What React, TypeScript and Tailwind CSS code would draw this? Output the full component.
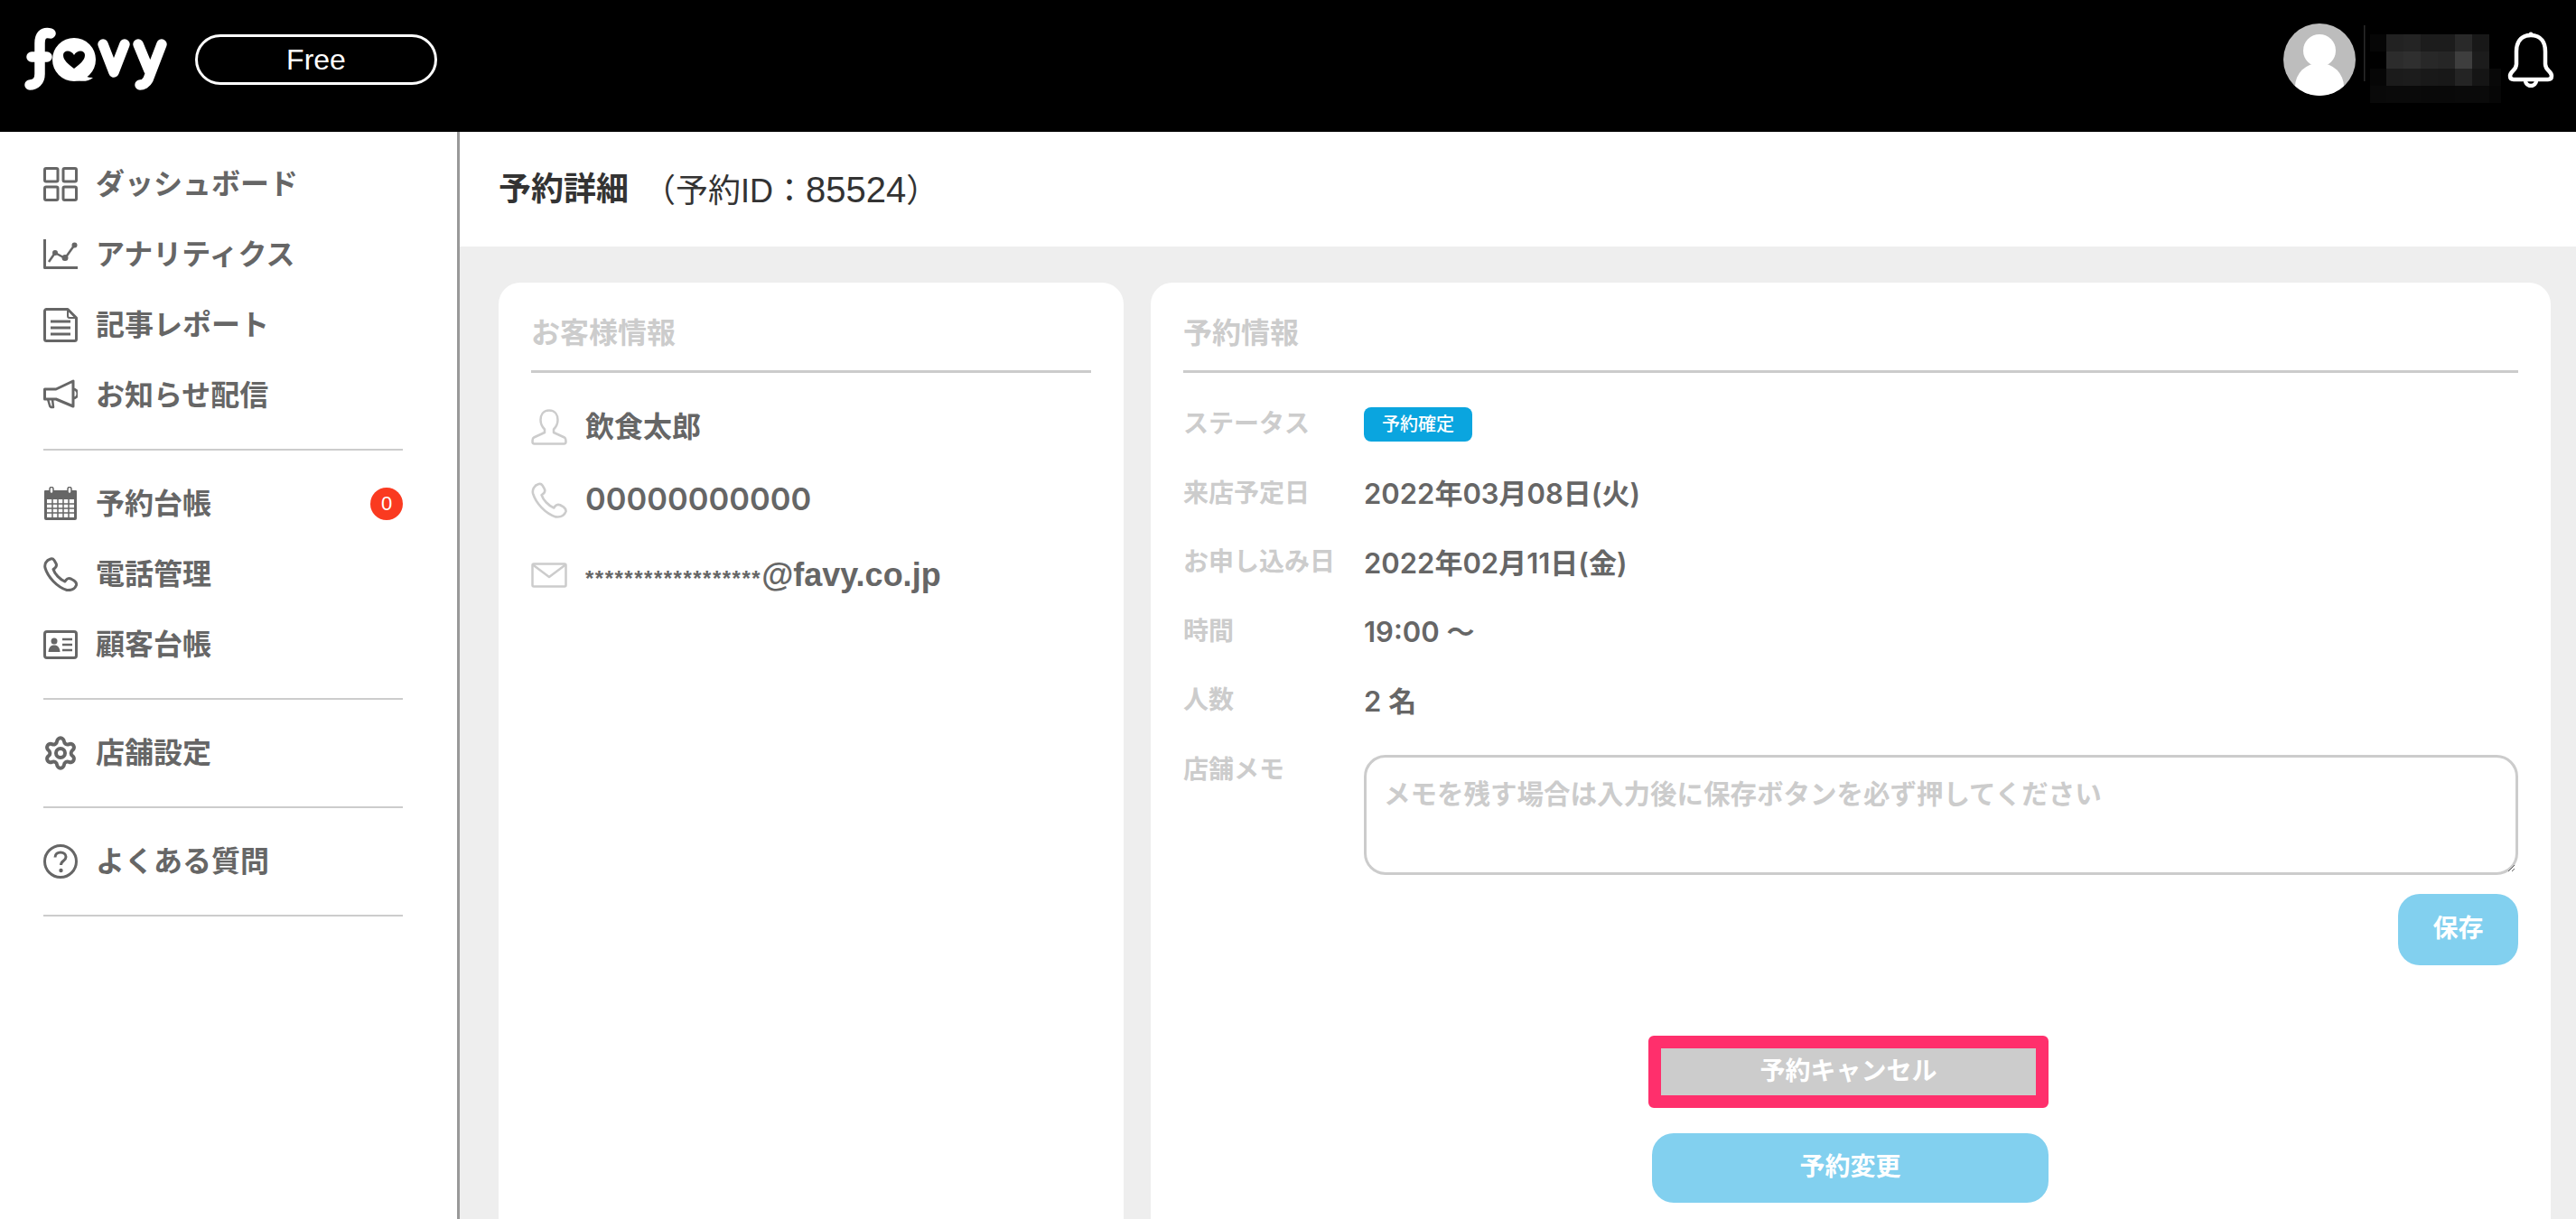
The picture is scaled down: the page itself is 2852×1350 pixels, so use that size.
import React from 'react';
import { Settings } from 'lucide-react';

const FONT = "font-['Liberation_Sans','Noto_Sans_CJK_JP',sans-serif]";
const VALUE_FONT = "font-['Inter','Noto_Sans_CJK_JP',sans-serif]";

const FavyLogo = () => (
  <svg width="160" height="72" viewBox="0 0 160 72" className="block">
    <g fill="none" stroke="#fff" strokeWidth="11.5" strokeLinecap="round" strokeLinejoin="round">
      <path d="M29 7 C20 5 17 10 17 18 L17 52 C17 60 12 64 6 64" />
      <path d="M8 33 L25 33" />
      <path d="M87 19 L99 50 L111 19" />
      <path d="M126 19 L138 48 M152 19 L137 58 C135 62 131 64 128 64" />
    </g>
    <circle cx="55" cy="36" r="24" fill="#fff" />
    <path d="M62 52 C66 54 70 56 76 56 C71 61 62 60 56 59 Z" fill="#fff" />
    <path d="M55 46 C49 41 43 37 43 31 C43 25 52 25 55 31 C58 25 67 25 67 31 C67 37 61 41 55 46 Z" fill="#000" />
  </svg>
);

const MOSAIC_X = [0, 18, 37, 56, 75, 94, 113, 132, 145];
const MOSAIC = [
  ['#060606', '#222222', '#242424', '#1c1c1c', '#1c1c1c', '#292929', '#181818', '#000000'],
  ['#000000', '#2c2c2c', '#2f2f2f', '#282828', '#262626', '#3e3e3e', '#1c1c1c', '#000000'],
  ['#060606', '#1b1b1b', '#1c1c1c', '#191919', '#181818', '#242424', '#151515', '#080808'],
  ['#090909', '#0a0a0a', '#0a0a0a', '#090909', '#090909', '#0a0a0a', '#0a0a0a', '#060606'],
];

const BlurredName = () => (
  <svg width="153" height="90" viewBox="0 0 153 90" className="block">
    <rect x="0" y="4" width="1.5" height="62" fill="#2a2a2a" />
    {MOSAIC.map((row, r) =>
      row.map((c, i) => (
        <rect key={`${r}-${i}`} x={MOSAIC_X[i] + 7} y={14 + r * 19} width={MOSAIC_X[i + 1] - MOSAIC_X[i]} height="19" fill={c} />
      ))
    )}
  </svg>
);

const Icon = ({ children }: { children: React.ReactNode }) => (
  <svg width="38" height="38" viewBox="0 0 38 38" fill="none" stroke="#666" strokeWidth="3" strokeLinejoin="round" className="shrink-0">
    {children}
  </svg>
);

const navGroups: { icon: React.ReactNode; label: string; badge?: string }[][] = [
  [
    {
      label: 'ダッシュボード',
      icon: (
        <Icon>
          <rect x="1.5" y="1.5" width="14.5" height="14.5" rx="1.5" />
          <rect x="22" y="1.5" width="14.5" height="14.5" rx="1.5" />
          <rect x="1.5" y="22" width="14.5" height="14.5" rx="1.5" />
          <rect x="22" y="22" width="14.5" height="14.5" rx="1.5" />
        </Icon>
      ),
    },
    {
      label: 'アナリティクス',
      icon: (
        <Icon>
          <path d="M1.5 2 V33.5 H38" />
          <path d="M6 27 L13 17 L24 23 L34 9" strokeWidth="2.5" />
          <circle cx="13" cy="17" r="1.5" fill="#666" />
          <circle cx="24" cy="22.5" r="2" fill="#666" />
          <circle cx="34.5" cy="8.5" r="3" fill="#666" stroke="none" />
        </Icon>
      ),
    },
    {
      label: '記事レポート',
      icon: (
        <Icon>
          <path d="M3.5 1.5 H27 L36.5 11 V34.5 a2 2 0 0 1 -2 2 H3.5 a2 2 0 0 1 -2 -2 V3.5 a2 2 0 0 1 2 -2 Z" />
          <path d="M27 2 V9 a2 2 0 0 0 2 2 H36" strokeWidth="2" />
          <path d="M8 15 H30 M8 22 H30 M8 29 H30" />
        </Icon>
      ),
    },
    {
      label: 'お知らせ配信',
      icon: (
        <Icon>
          <path d="M1.5 12 H14 L33 3 V31 L14 23 H1.5 Z" />
          <path d="M33 12 a5 5 0 0 1 0 10" />
          <path d="M5 23 L7 30 a2.5 2.5 0 0 0 3 2 L11 32 L10 23" strokeWidth="2.5" />
        </Icon>
      ),
    },
  ],
  [
    {
      label: '予約台帳',
      badge: '0',
      icon: (
        <Icon>
          <path d="M2 4 H36 a1 1 0 0 1 1 1 V35 a2 2 0 0 1 -2 2 H3 a2 2 0 0 1 -2 -2 V5 a1 1 0 0 1 1 -1 Z" fill="#666" stroke="none" />
          <rect x="7" y="0.5" width="4" height="7" rx="2" fill="#fff" stroke="#666" strokeWidth="1.5" />
          <rect x="27" y="0.5" width="4" height="7" rx="2" fill="#fff" stroke="#666" strokeWidth="1.5" />
          <path d="M4 14 H34 V34 H4 Z" fill="#fff" stroke="none" />
          <path d="M4 19 H34 M4 24 H34 M4 29 H34 M10 14 V34 M16 14 V34 M22 14 V34 M28 14 V34" stroke="#666" strokeWidth="1.5" />
        </Icon>
      ),
    },
    {
      label: '電話管理',
      icon: (
        <Icon>
          <path d="M8 2 C3 3.5 1 8 2 12 C5 22 15 33 26 36.5 C31 37 35 35 36.5 31 C37 29 36 27.5 34 26 L30.5 24 C28 23 26.5 23.5 25 25.5 L24 27 C18.5 25 12.5 18.5 11 13.5 L13 12 C14.5 10.5 15 9 14 7 L12 3.5 C11 2 9.5 1.5 8 2 Z" />
        </Icon>
      ),
    },
    {
      label: '顧客台帳',
      icon: (
        <Icon>
          <rect x="1.5" y="4.5" width="35" height="29" rx="2.5" />
          <circle cx="12" cy="15" r="3.5" fill="#666" stroke="none" />
          <path d="M5.5 27 C6 21 9 19.5 12 19.5 C15 19.5 18 21 18.5 27 Z" fill="#666" stroke="none" />
          <path d="M21 13 H32 M21 19 H32 M21 25 H32" strokeWidth="2.5" />
        </Icon>
      ),
    },
  ],
  [
    {
      label: '店舗設定',
      icon: <Settings size={40} color="#666" strokeWidth={2.4} className="shrink-0 -mx-px" />,
    },
  ],
  [
    {
      label: 'よくある質問',
      icon: (
        <Icon>
          <circle cx="19" cy="19" r="17.5" />
          <path d="M13 14.5 C13 10.5 16 9 19 9 C22.5 9 25 11 25 14 C25 18.5 19.5 18 19.5 23" />
          <circle cx="19.5" cy="29" r="2.2" fill="#666" stroke="none" />
        </Icon>
      ),
    },
  ],
];

const Sidebar = () => (
  <aside className="w-[509px] shrink-0 bg-white border-r-[3px] border-[#999] pl-[48px] pr-[60px] overflow-hidden">
    {navGroups.map((group, g) => (
      <div key={g} className={`border-b-2 border-[#ccc] pb-[20px] ${g === 0 ? 'pt-[19px]' : 'pt-[20px]'}`}>
        {group.map((item) => (
          <div key={item.label} className="h-[78px] flex items-center gap-[20px]">
            {item.icon}
            <span className="text-[32px] font-bold text-[#666] flex-1 leading-none">{item.label}</span>
            {item.badge && (
              <span className="w-[36px] h-[36px] rounded-full bg-[#fa3a20] text-white text-[22px] flex items-center justify-center leading-none">
                {item.badge}
              </span>
            )}
          </div>
        ))}
      </div>
    ))}
  </aside>
);

const CardTitle = ({ children }: { children: React.ReactNode }) => (
  <div className="h-[63px] border-b-[3px] border-[#ccc] pb-[10px] flex items-center text-[32px] font-bold text-[#ccc] leading-none box-content">
    {children}
  </div>
);

const rows: [string, React.ReactNode][] = [
  [
    'ステータス',
    <span className="w-[120px] h-[38px] rounded-[8px] bg-[#0aa5df] text-white text-[20px] font-medium flex items-center justify-center leading-none">
      予約確定
    </span>,
  ],
  ['来店予定日', '2022年03月08日(火)'],
  ['お申し込み日', '2022年02月11日(金)'],
  ['時間', '19:00 〜'],
  ['人数', '2 名'],
];

const CustomerCard = () => (
  <section className="w-[692px] shrink-0 bg-white rounded-t-[24px] px-[36px] pt-[24px]">
    <CardTitle>お客様情報</CardTitle>
    <div className="h-[81px] mt-[19px] flex items-center gap-[20px] text-[32px] font-bold text-[#666]">
      <svg width="40" height="40" viewBox="0 0 40 40" fill="none" stroke="#ccc" strokeWidth="2.5" strokeLinejoin="round" className="shrink-0">
        <path d="M20 1.5 C13 1.5 10.5 7 10.5 12 C10.5 17 12.5 20 15 22.5 L15 26 L3 31.5 C1.5 32.5 1.5 34 1.5 36 C1.5 37.5 2 38.5 3.5 38.5 H36.5 C38 38.5 38.5 37.5 38.5 36 C38.5 34 38.5 32.5 37 31.5 L25 26 L25 22.5 C27.5 20 29.5 17 29.5 12 C29.5 7 27 1.5 20 1.5 Z" />
      </svg>
      飲食太郎
    </div>
    <div className={`${VALUE_FONT} h-[81px] flex items-center gap-[20px] text-[34.5px] font-semibold text-[#666] leading-none`}>
      <svg width="40" height="40" viewBox="0 0 38 38" fill="none" stroke="#ccc" strokeWidth="2.5" strokeLinejoin="round" className="shrink-0">
        <path d="M8 2 C3 3.5 1 8 2 12 C5 22 15 33 26 36.5 C31 37 35 35 36.5 31 C37 29 36 27.5 34 26 L30.5 24 C28 23 26.5 23.5 25 25.5 L24 27 C18.5 25 12.5 18.5 11 13.5 L13 12 C14.5 10.5 15 9 14 7 L12 3.5 C11 2 9.5 1.5 8 2 Z" />
      </svg>
      00000000000
    </div>
    <div className="h-[85px] flex items-center gap-[20px] text-[36px] font-bold text-[#666] leading-none">
      <svg width="40" height="28" viewBox="0 0 40 28" fill="none" stroke="#ccc" strokeWidth="2.5" strokeLinejoin="round" className="shrink-0">
        <rect x="1.5" y="1.5" width="37" height="25" rx="1.5" />
        <path d="M2 2.5 L20 16 L38 2.5" />
      </svg>
      <span className="flex items-baseline">
        <span className="text-[24px] tracking-[1.5px] leading-none">******************</span>@favy.co.jp
      </span>
    </div>
  </section>
);

const ReservationCard = () => (
  <section className="flex-1 bg-white rounded-t-[24px] px-[36px] pt-[24px]">
    <CardTitle>予約情報</CardTitle>
    <div className="mt-[19px]">
      {rows.map(([label, value]) => (
        <div key={label} className="h-[76.5px] flex items-center">
          <div className="w-[200px] text-[28px] font-bold text-[#ccc] leading-none">{label}</div>
          <div className={`${VALUE_FONT} text-[31px] font-semibold text-[#666] leading-none`}>{value}</div>
        </div>
      ))}
      <div className="flex items-start h-[154px]">
        <div className="w-[200px] h-[76.5px] flex items-center text-[28px] font-bold text-[#ccc] leading-none">店舗メモ</div>
        <textarea
          placeholder="メモを残す場合は入力後に保存ボタンを必ず押してください"
          className="mt-[21px] flex-1 h-[133px] block border-[3px] border-[#ccc] rounded-[24px] px-[19px] py-[26px] text-[29.5px] font-bold leading-none placeholder:text-[#ccc] outline-none"
        />
      </div>
    </div>
    <div className="flex justify-end mt-[21px]">
      <button className="w-[133px] h-[79px] rounded-[24px] bg-[#82d0ef] text-white text-[28px] font-bold">保存</button>
    </div>
    <div className="ml-[515px] w-[443px] mt-[78px] flex flex-col items-end">
      <button className="w-[443px] h-[80px] border-[14px] border-[#ff2f6c] rounded-[6px] bg-[#ccc] text-white text-[28px] font-bold leading-none">
        予約キャンセル
      </button>
      <button className="mt-[28px] w-[439px] h-[77px] rounded-[24px] bg-[#82d0ef] text-white text-[28px] font-bold">予約変更</button>
    </div>
  </section>
);

export default function App() {
  return (
    <div className={`${FONT} h-screen flex flex-col overflow-hidden bg-white`}>
      <header className="h-[146px] shrink-0 bg-black flex items-start">
        <div className="ml-[27px] mt-[30px]">
          <FavyLogo />
        </div>
        <div className="ml-[29px] mt-[38px] w-[268px] h-[56px] rounded-full border-[3px] border-white text-white text-[32px] flex items-center justify-center leading-none">
          Free
        </div>
        <div className="ml-auto mr-[24px] mt-[24px] flex items-start">
          <div className="w-[80px] h-[80px] mt-[2px] rounded-full bg-[#bdbdbd] overflow-hidden relative">
            <div className="absolute left-[22px] top-[12px] w-[36px] h-[36px] rounded-full bg-white" />
            <div className="absolute left-[13px] top-[44px] w-[54px] h-[50px] rounded-t-[26px] bg-white" />
          </div>
          <div className="ml-[9px]">
            <BlurredName />
          </div>
          <svg width="52" height="62" viewBox="0 0 52 62" fill="none" stroke="#fff" strokeWidth="4.5" strokeLinejoin="round" className="ml-[6px] mt-[11px]">
            <path d="M26 4 C14 4 10 13 10 22 L10 36 C10 43 3 44 3 49 C3 52 5 53 7 53 H45 C47 53 49 52 49 49 C49 44 42 43 42 36 L42 22 C42 13 38 4 26 4 Z" />
            <path d="M20 54 a6 6 0 0 0 12 0" />
            <circle cx="26" cy="3" r="2.5" fill="#fff" stroke="none" />
          </svg>
        </div>
      </header>
      <div className="flex-1 flex min-h-0">
        <Sidebar />
        <main className="flex-1 flex flex-col min-w-0 bg-[#eeeeee]">
          <div className="h-[127px] shrink-0 bg-white flex items-center pl-[43px] text-[36px] text-[#333] leading-none">
            <span className="font-bold">予約詳細</span>
            <span className="ml-[16px]">
              （予約ID：<span className="text-[40px]">85524</span>）
            </span>
          </div>
          <div className="flex-1 flex gap-[30px] pl-[43px] pr-[28px] pt-[40px] min-h-0">
            <CustomerCard />
            <ReservationCard />
          </div>
        </main>
      </div>
    </div>
  );
}
